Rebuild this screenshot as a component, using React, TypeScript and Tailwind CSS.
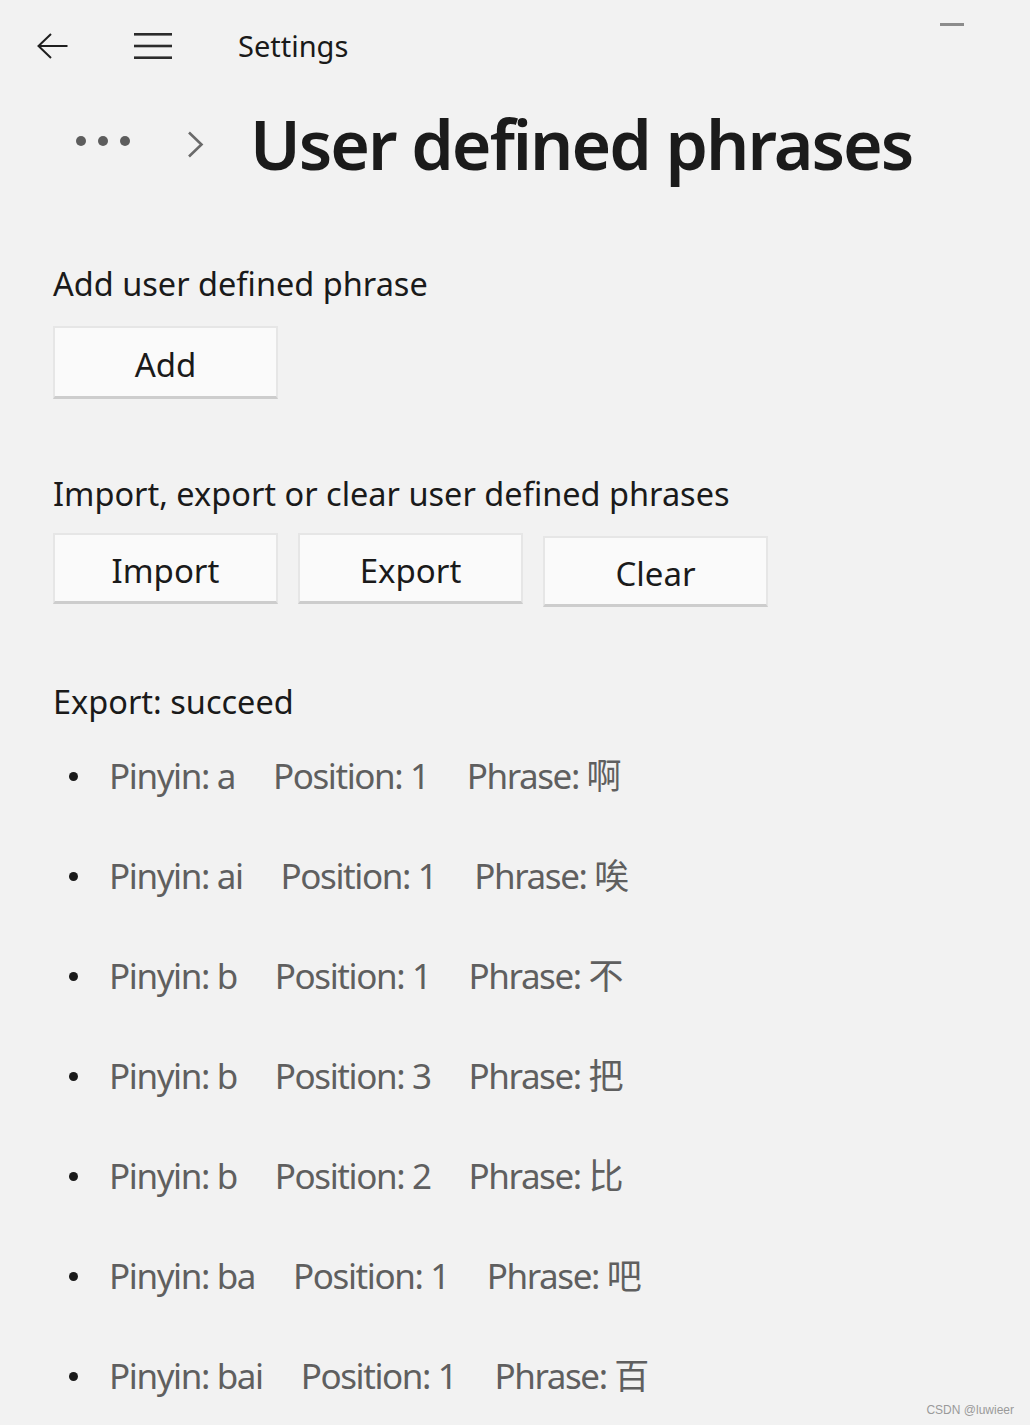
import React from 'react';

interface Entry {
  pinyin: string;
  position: number;
  phrase: string;
}

const entries: Entry[] = [
  { pinyin: 'a', position: 1, phrase: '啊' },
  { pinyin: 'ai', position: 1, phrase: '唉' },
  { pinyin: 'b', position: 1, phrase: '不' },
  { pinyin: 'b', position: 3, phrase: '把' },
  { pinyin: 'b', position: 2, phrase: '比' },
  { pinyin: 'ba', position: 1, phrase: '吧' },
  { pinyin: 'bai', position: 1, phrase: '百' },
];

function ActionButton({ label, className = '' }: { label: string; className?: string }) {
  return (
    <button
      className={`flex w-[225px] items-center justify-center border-2 border-[#e6e6e6] border-b-[3px] border-b-[#cdcdcd] bg-[#fafafa] pt-[6px] text-[33px] leading-[44px] text-[#1a1a1a] ${className}`}
    >
      {label}
    </button>
  );
}

export default function App() {
  return (
    <div className="relative h-[1425px] w-full overflow-hidden bg-[#f2f2f2] font-['Noto_Sans','Noto_Sans_CJK_SC',sans-serif] text-[#1a1a1a]">
      {/* title bar */}
      <header className="flex h-[92px] items-start justify-between">
        <div className="flex h-full items-center gap-[66px] pl-[37px]">
          <svg width="31" height="26" viewBox="0 0 31 26" fill="none" stroke="#1f1f1f" strokeWidth="2">
            <path d="M1.5 13H30.5M14 1L1.5 13L14 25" />
          </svg>
          <svg width="38" height="26" viewBox="0 0 38 26" fill="#2b2b2b">
            <rect x="0" y="0" width="38" height="2.6" />
            <rect x="0" y="11.7" width="38" height="2.6" />
            <rect x="0" y="23.4" width="38" height="2.6" />
          </svg>
          <span className="text-[29px] leading-[40px] text-[#1a1a1a]">Settings</span>
        </div>
        <div className="mr-[66px] mt-[23px] h-[3px] w-[24px] bg-[#8c8c8c]" />
      </header>

      {/* breadcrumb */}
      <div className="mt-[12px] flex h-[80px] items-center pl-[76px]">
        <div className="mb-[6px] flex gap-[12px]">
          <span className="h-[10px] w-[10px] rounded-full bg-[#5d5d5d]" />
          <span className="h-[10px] w-[10px] rounded-full bg-[#5d5d5d]" />
          <span className="h-[10px] w-[10px] rounded-full bg-[#5d5d5d]" />
        </div>
        <svg className="ml-[57px]" width="17" height="27" viewBox="0 0 17 27" fill="none" stroke="#6a6a6a" strokeWidth="2.6">
          <path d="M2 1.5L14.5 13.5L2 25.5" />
        </svg>
        <h1 className="ml-[46px] text-[68px] font-semibold leading-[80px] tracking-[-2px] text-[#1b1b1b]">
          User defined phrases
        </h1>
      </div>

      <main className="pl-[53px]">
        <section className="mt-[78px]">
          <h2 className="text-[32.5px] leading-[44px]">Add user defined phrase</h2>
          <ActionButton label="Add" className="mt-[20px] h-[73px]" />
        </section>

        <section className="mt-[73px]">
          <h2 className="text-[32.5px] leading-[44px]">Import, export or clear user defined phrases</h2>
          <div className="mt-[17px] flex items-start gap-[20px]">
            <ActionButton label="Import" className="h-[71px]" />
            <ActionButton label="Export" className="h-[71px]" />
            <ActionButton label="Clear" className="mt-[3px] h-[71px]" />
          </div>
        </section>

        <section className="mt-[73px]">
          <p className="text-[32.5px] leading-[44px]">Export: succeed</p>
          <ul className="mt-[2px]">
            {entries.map((e, i) => (
              <li key={i} className="flex h-[100px] items-center">
                <span className="ml-[16px] h-[9px] w-[9px] rounded-full bg-[#1a1a1a]" />
                <div className="ml-[31px] flex gap-[38px] text-[35px] leading-[100px] tracking-[-1.4px] text-[#5f5f5f]">
                  <span>Pinyin: {e.pinyin}</span>
                  <span>Position: {e.position}</span>
                  <span>Phrase: {e.phrase}</span>
                </div>
              </li>
            ))}
          </ul>
        </section>
      </main>

      <span className="absolute bottom-[6px] right-[16px] font-['Liberation_Sans',sans-serif] text-[12px] text-[#9a9a9a]">
        CSDN @luwieer
      </span>
    </div>
  );
}
